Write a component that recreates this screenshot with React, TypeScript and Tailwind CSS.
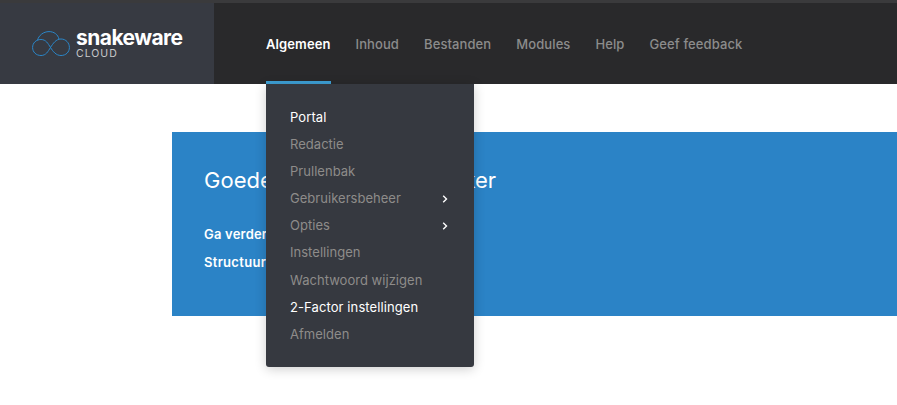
const NAV = ['Inhoud', 'Bestanden', 'Modules', 'Help', 'Geef feedback']

const MENU = [
  { label: 'Portal', on: true },
  { label: 'Redactie' },
  { label: 'Prullenbak' },
  { label: 'Gebruikersbeheer', sub: true },
  { label: 'Opties', sub: true },
  { label: 'Instellingen' },
  { label: 'Wachtwoord wijzigen' },
  { label: '2-Factor instellingen', on: true },
  { label: 'Afmelden' },
]

function Cloud() {
  return (
    <svg width="38" height="26" viewBox="0 0 38 26" fill="none" stroke="#2b86c8" strokeWidth="1" className="shrink-0">
      <path d="M9 24.5 C4 24.5 .6 21 .6 16.5 C.6 12 4 8.5 9 8.5 C14 8.5 16 12.5 18.5 16.5 C21 20.5 24 24.5 29 24.5 C34 24.5 37.4 21 37.4 16.5 C37.4 12 34 8 29 8 C24 8 21 12.5 18.5 16.5 C16 20.5 14 24.5 9 24.5" />
      <path d="M5.5 9.4 C6.5 4.5 11.5 .6 17 .6 C22 .6 26 3.5 27 8.2" />
    </svg>
  )
}

function Chevron() {
  return (
    <svg width="6" height="8" viewBox="0 0 6 8" fill="none" stroke="#ffffff" strokeWidth="1.4" className="shrink-0">
      <path d="M1.2 .8 L4.5 4 L1.2 7.2" />
    </svg>
  )
}

export default function App() {
  return (
    <div className="relative h-[405px] overflow-hidden bg-white font-['Inter',sans-serif]">
      <header className="h-[84px] border-t-[3px] border-[#3a3a3c] bg-[#29292b] flex">
        <div className="w-[214px] bg-[#373a42] flex items-center pl-[32px] gap-[6px]">
          <Cloud />
          <div className="flex flex-col mt-[2px]">
            <span className="text-[21px] leading-[18px] font-bold text-white tracking-[-0.55px]">snakeware</span>
            <span className="mt-[1px] text-[10.5px] leading-[12px] tracking-[1px] text-[#c8c9cb]">CLOUD</span>
          </div>
        </div>
        <nav className="flex ml-[52px] gap-[25px] text-[13px] leading-[16px] tracking-[0.1px] pt-[33px]">
          <a className="h-[48px] border-b-[3px] border-[#3ea0d6] font-semibold text-white">Algemeen</a>
          {NAV.map((n) => (
            <a key={n} className="font-medium text-[#8c8c8c]">{n}</a>
          ))}
        </nav>
      </header>

      <main className="ml-[172px] mt-[48px] h-[184px] bg-[#2b83c6] pl-[32px] pt-[33px] text-white">
        <h1 className="text-[22px] leading-[30px] tracking-[0.04px]">Goedemiddag, Peter Bakker</h1>
        <p className="mt-[31px] text-[13px] leading-[16px] tracking-[0.2px] font-semibold">Ga verder</p>
        <p className="mt-[12px] text-[13px] leading-[16px] tracking-[0.3px] font-semibold">Structuur</p>
      </main>

      <div className="absolute left-[266px] top-[84px] w-[208px] h-[283px] rounded-b-[3px] bg-[#363940] pt-[20px] pl-[24px] pr-[26px] shadow-[0_2px_12px_rgba(0,0,0,0.2)]">
        {MENU.map((m) => (
          <div key={m.label} className={`flex h-[27.125px] items-center justify-between text-[13px] ${m.on ? 'text-white tracking-[0.1px]' : 'text-[#8e8c8a] tracking-[0.03px]'}`}>
            <span>{m.label}</span>
            {m.sub && <Chevron />}
          </div>
        ))}
      </div>
    </div>
  )
}
